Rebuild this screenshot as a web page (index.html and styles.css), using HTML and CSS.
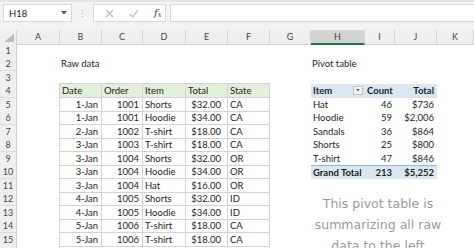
FILE: index.html
```html
<!DOCTYPE html>
<html>
<head>
<meta charset="utf-8">
<link rel="stylesheet" href="styles.css">
</head>
<body>
<div class="toolbar">
  <div class="namebox"><span>H18</span><svg class="caret" width="6" height="4" viewBox="0 0 6 4"><path d="M0 0H6L3 3.5Z" fill="#555"/></svg></div>
  <div class="grip"><i></i><i></i><i></i></div>
  <div class="fbuttons">
    <svg class="ico" width="9" height="9" viewBox="0 0 9 9"><path d="M1 1L8 8M8 1L1 8" stroke="#b9b9b9" stroke-width="1.2"/></svg>
    <svg class="ico" width="10" height="9" viewBox="0 0 10 9"><path d="M1 5L3.8 7.8L9 1" stroke="#b9b9b9" stroke-width="1.2" fill="none"/></svg>
    <span class="fx">f<sub>x</sub></span>
  </div>
  <div class="formula"></div>
</div>
<div class="sheet">
  <div class="r hdr"><div class="corner"><svg width="10" height="8" viewBox="0 0 10 8"><path d="M10 0V8H0Z" fill="#bcbcbc"/></svg></div><div class="ch">A</div><div class="ch">B</div><div class="ch">C</div><div class="ch">D</div><div class="ch">E</div><div class="ch">F</div><div class="ch">G</div><div class="ch sel">H</div><div class="ch">I</div><div class="ch">J</div><div class="ch">K</div></div>
  <div class="r"><div class="rh">1</div><div class="c"></div><div class="c"></div><div class="c"></div><div class="c"></div><div class="c"></div><div class="c"></div><div class="c"></div><div class="c"></div><div class="c"></div><div class="c"></div><div class="c"></div></div>
  <div class="r"><div class="rh">2</div><div class="c"></div><div class="c lbl">Raw data</div><div class="c"></div><div class="c"></div><div class="c"></div><div class="c"></div><div class="c"></div><div class="c lbl">Pivot table</div><div class="c"></div><div class="c"></div><div class="c"></div></div>
  <div class="r"><div class="rh">3</div><div class="c"></div><div class="c"></div><div class="c"></div><div class="c"></div><div class="c"></div><div class="c"></div><div class="c"></div><div class="c"></div><div class="c"></div><div class="c"></div><div class="c"></div></div>
  <div class="r"><div class="rh">4</div><div class="c"></div><div class="t th first">Date</div><div class="t th">Order</div><div class="t th">Item</div><div class="t th">Total</div><div class="t th">State</div><div class="c"></div><div class="p ph">Item<span class="filter"><svg width="4" height="3" viewBox="0 0 4 3"><path d="M0 0H4L2 2.5Z" fill="#666"/></svg></span></div><div class="p ph pn">Count</div><div class="p ph pn">Total</div><div class="c"></div></div>
  <div class="r"><div class="rh">5</div><div class="c"></div><div class="t n first">1-Jan</div><div class="t n">1001</div><div class="t">Shorts</div><div class="t m">$32.00</div><div class="t">CA</div><div class="c"></div><div class="p">Hat</div><div class="p pn">46</div><div class="p pn">$736</div><div class="c"></div></div>
  <div class="r"><div class="rh">6</div><div class="c"></div><div class="t n first">1-Jan</div><div class="t n">1001</div><div class="t">Hoodie</div><div class="t m">$34.00</div><div class="t">CA</div><div class="c"></div><div class="p">Hoodie</div><div class="p pn">59</div><div class="p pn">$2,006</div><div class="c"></div></div>
  <div class="r"><div class="rh">7</div><div class="c"></div><div class="t n first">2-Jan</div><div class="t n">1002</div><div class="t">T-shirt</div><div class="t m">$18.00</div><div class="t">CA</div><div class="c"></div><div class="p">Sandals</div><div class="p pn">36</div><div class="p pn">$864</div><div class="c"></div></div>
  <div class="r"><div class="rh">8</div><div class="c"></div><div class="t n first">3-Jan</div><div class="t n">1003</div><div class="t">T-shirt</div><div class="t m">$18.00</div><div class="t">CA</div><div class="c"></div><div class="p">Shorts</div><div class="p pn">25</div><div class="p pn">$800</div><div class="c"></div></div>
  <div class="r"><div class="rh">9</div><div class="c"></div><div class="t n first">3-Jan</div><div class="t n">1004</div><div class="t">Shorts</div><div class="t m">$32.00</div><div class="t">OR</div><div class="c"></div><div class="p">T-shirt</div><div class="p pn">47</div><div class="p pn">$846</div><div class="c"></div></div>
  <div class="r"><div class="rh">10</div><div class="c"></div><div class="t n first">3-Jan</div><div class="t n">1004</div><div class="t">Hoodie</div><div class="t m">$34.00</div><div class="t">OR</div><div class="c"></div><div class="p pt">Grand Total</div><div class="p pt pn">213</div><div class="p pt pn">$5,252</div><div class="c"></div></div>
  <div class="r"><div class="rh">11</div><div class="c"></div><div class="t n first">3-Jan</div><div class="t n">1004</div><div class="t">Hat</div><div class="t m">$16.00</div><div class="t">OR</div><div class="c"></div><div class="c"></div><div class="c"></div><div class="c"></div><div class="c"></div></div>
  <div class="r"><div class="rh">12</div><div class="c"></div><div class="t n first">4-Jan</div><div class="t n">1005</div><div class="t">Shorts</div><div class="t m">$32.00</div><div class="t">ID</div><div class="c"></div><div class="c"></div><div class="c"></div><div class="c"></div><div class="c"></div></div>
  <div class="r"><div class="rh">13</div><div class="c"></div><div class="t n first">4-Jan</div><div class="t n">1005</div><div class="t">Hoodie</div><div class="t m">$34.00</div><div class="t">ID</div><div class="c"></div><div class="c"></div><div class="c"></div><div class="c"></div><div class="c"></div></div>
  <div class="r"><div class="rh">14</div><div class="c"></div><div class="t n first">5-Jan</div><div class="t n">1006</div><div class="t">T-shirt</div><div class="t m">$18.00</div><div class="t">CA</div><div class="c"></div><div class="c"></div><div class="c"></div><div class="c"></div><div class="c"></div></div>
  <div class="r"><div class="rh">15</div><div class="c"></div><div class="t n first">5-Jan</div><div class="t n">1006</div><div class="t">T-shirt</div><div class="t m">$18.00</div><div class="t">CA</div><div class="c"></div><div class="c"></div><div class="c"></div><div class="c"></div><div class="c"></div></div>
  <div class="r"><div class="rh">16</div><div class="c"></div><div class="t first"></div><div class="t"></div><div class="t"></div><div class="t"></div><div class="t"></div><div class="c"></div><div class="c"></div><div class="c"></div><div class="c"></div><div class="c"></div></div>
</div>
<div class="note">This pivot table is<br>summarizing all raw<br>data to the left</div>
</body>
</html>
```

FILE: styles.css
```css
* { box-sizing: border-box; }
html, body { margin: 0; padding: 0; }
body {
  width: 474px;
  height: 248px;
  overflow: hidden;
  position: relative;
  background: #fff;
  font-family: Lato, "Liberation Sans", sans-serif;
  font-size: 9.5px;
  color: #1e1e1e;
}
.toolbar {
  height: 30px;
  background: #f3f3f3;
  border-top: 2px solid #e4e4e4;
  display: flex;
  align-items: flex-start;
  padding: 2px 0 0 3px;
}
.namebox {
  width: 69px;
  height: 18px;
  background: #fff;
  border: 1px solid #d9d9d9;
  display: flex;
  align-items: center;
  justify-content: space-between;
  padding: 0 4px 0 5px;
  color: #222;
  font-size: 9.5px;
}
.grip {
  width: 21px;
  height: 18px;
  display: flex;
  flex-direction: column;
  align-items: center;
  justify-content: center;
  gap: 2px;
}
.grip i {
  display: block;
  width: 1px;
  height: 1px;
  background: #a9a9a9;
}
.fbuttons {
  width: 73px;
  height: 18px;
  background: #fff;
  border: 1px solid #d9d9d9;
  display: flex;
  align-items: center;
  padding-left: 11px;
  gap: 15px;
}
.fx {
  font-family: "DejaVu Serif", "Liberation Serif", serif;
  font-style: italic;
  font-size: 10px;
  color: #444;
}
.fx sub { font-size: 7px; vertical-align: -1px; }
.formula {
  flex: 1;
  height: 18px;
  margin-left: 4px;
  background: #fff;
  border: 1px solid #d9d9d9;
  border-right: none;
}
.r {
  display: grid;
  grid-template-columns: 17px 43px 42px 41px 43px 42px 42px 41px 54px 30px 42px 37px;
  height: 13.5px;
  line-height: 13px;
  white-space: nowrap;
}
.hdr > div {
  background: #efefef;
  border-right: 1px solid #d5d5d5;
  border-bottom: 1px solid #cdcdcd;
  text-align: center;
  color: #444;
  font-size: 9px;
}
.hdr .corner {
  display: flex;
  align-items: flex-end;
  justify-content: flex-end;
  padding: 0 2px 2px 0;
}
.hdr .sel {
  background: #d3d3d3;
  border-bottom: 2px solid #217346;
}
.rh {
  background: #efefef;
  border-right: 1px solid #cdcdcd;
  border-bottom: 1px solid #dcdcdc;
  text-align: center;
  color: #444;
  font-size: 9px;
}
.lbl { padding-left: 1px; }
.t {
  border-right: 1px solid #d4d4d4;
  border-bottom: 1px solid #d4d4d4;
  padding: 0 2px;
}
.t.first { border-left: 1px solid #d4d4d4; margin-left: -1px; }
.th { background: #e2efda; border-top: 1px solid #d4d4d4; margin-top: -1px; }
.n { text-align: right; padding-right: 3px; }
.m { text-align: right; padding-right: 6px; }
.p { padding: 0 2px; position: relative; }
.pn { text-align: right; padding-right: 3px; }
.ph { background: #dce6f1; font-weight: bold; }
.pt { background: #dce6f1; font-weight: bold; border-top: 1px solid #95b3d7; }
.filter {
  position: absolute;
  right: 2px;
  top: 2px;
  width: 10px;
  height: 9px;
  background: #f4f4f4;
  border: 1px solid #c4c4c4;
  display: flex;
  align-items: center;
  justify-content: center;
}
.note {
  position: absolute;
  left: 300px;
  top: 193px;
  width: 156px;
  text-align: center;
  font-family: "DejaVu Sans", sans-serif;
  font-size: 12.5px;
  line-height: 21px;
  color: #9a9a9a;
}
```
